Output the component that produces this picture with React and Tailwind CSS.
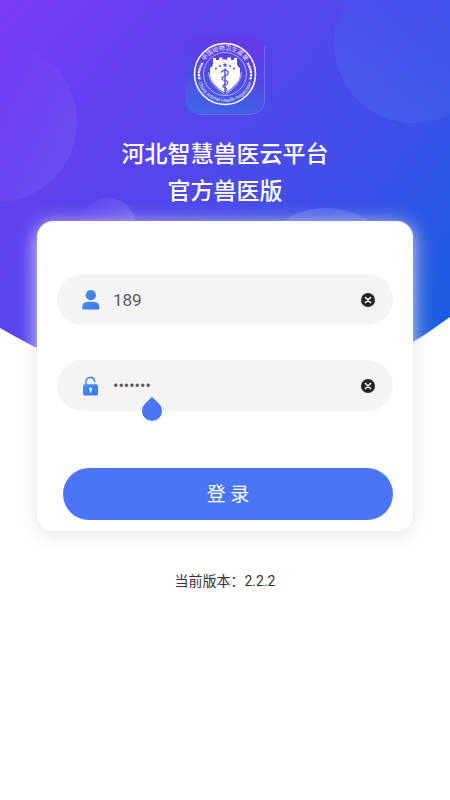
import { useState } from "react";

const FONT = "font-['Roboto','Noto_Sans_CJK_SC',sans-serif]";

function Backdrop() {
  return (
    <svg
      className="absolute inset-x-0 top-0 h-[410px] w-full"
      viewBox="0 0 450 410"
      preserveAspectRatio="none"
      aria-hidden="true"
    >
      <defs>
        <linearGradient id="sky" gradientUnits="userSpaceOnUse" x1="0" y1="0" x2="400" y2="340">
          <stop offset="0" stopColor="#7a3bf7" />
          <stop offset="0.25" stopColor="#6540f1" />
          <stop offset="0.5" stopColor="#5147ec" />
          <stop offset="0.8" stopColor="#3653e7" />
          <stop offset="1" stopColor="#1d5de2" />
        </linearGradient>
        <linearGradient id="bubbleLeft" gradientUnits="userSpaceOnUse" x1="0" y1="90" x2="77" y2="130">
          <stop offset="0" stopColor="#fff" stopOpacity="0" />
          <stop offset="1" stopColor="#fff" stopOpacity="0.06" />
        </linearGradient>
        <linearGradient id="bubbleRight" gradientUnits="userSpaceOnUse" x1="370" y1="110" x2="440" y2="0">
          <stop offset="0" stopColor="#5478f2" stopOpacity="0.3" />
          <stop offset="1" stopColor="#3560ea" stopOpacity="0.2" />
        </linearGradient>
        <linearGradient id="bubbleSmall" x1="0" y1="0.6" x2="1" y2="0.2">
          <stop offset="0" stopColor="#fff" stopOpacity="0" />
          <stop offset="1" stopColor="#fff" stopOpacity="0.13" />
        </linearGradient>
      </defs>
      <path d="M0 0H450V317Q338 400 225 400Q125 400 0 328Z" fill="url(#sky)" />
      <circle cx="-3" cy="122" r="80" fill="url(#bubbleLeft)" />
      <circle cx="414" cy="43" r="80" fill="url(#bubbleRight)" />
      <circle cx="108" cy="226" r="28" fill="url(#bubbleSmall)" />
      <circle cx="326" cy="288" r="80" fill="#fff" fillOpacity="0.12" />
    </svg>
  );
}

function Logo() {
  return (
    <svg className="size-20" viewBox="0 0 80 80" role="img" aria-label="中国动物卫生监督">
      <defs>
        <linearGradient id="tile" x1="0.6" y1="0" x2="0.4" y2="1">
          <stop offset="0" stopColor="#663ae8" />
          <stop offset="0.5" stopColor="#5148e8" />
          <stop offset="1" stopColor="#4065e8" />
        </linearGradient>
        <path id="arcTop" d="M16 39A24 24 0 0 1 64 39" />
        <path id="arcBottom" d="M12 39A28 28 0 0 0 68 39" />
      </defs>
      <rect width="79" height="79" rx="14" fill="url(#tile)" />
      <path d="M79.5 12V66Q79 78 66 79.5H14" fill="none" stroke="#8a98f3" strokeWidth="0.8" opacity="0.6" />
      <circle cx="40" cy="39" r="30.5" fill="none" stroke="#fff" strokeWidth="1.5" />
      <circle cx="40" cy="39" r="21.5" fill="none" stroke="#dcdcff" strokeWidth="0.7" />
      <text fill="#f2f2ff" fontSize="6" textAnchor="middle" className={FONT}>
        <textPath href="#arcTop" startOffset="50%">中国动物卫生监督</textPath>
      </text>
      <text fill="#e2e6ff" fontSize="5" textAnchor="middle" className={FONT}>
        <textPath href="#arcBottom" startOffset="50%">China Animal Health Inspection</textPath>
      </text>
      <g fill="none" stroke="#fff" strokeWidth="2.200" strokeDasharray="2.200 0.700">
        <path d="M17.500 28Q12 37 15 45" />
        <path d="M62.500 28Q68 37 65 45" />
      </g>
      <path
        d="M28 27V23H31V25H34V22.500H37.500V24.500H42.500V22.500H46V25H49V23H52V27Q51.500 31 55 33V41Q54 49 40 58Q26 49 25 41V33Q28.500 31 28 27Z"
        fill="#fff"
      />
      <path d="M23.500 37Q24 50 40 59.500Q56 50 56.500 37" fill="none" stroke="#dcdcff" strokeWidth="0.800" />
      <g fill="#5548e6">
        <circle cx="31" cy="33.500" r="1" />
        <circle cx="35" cy="31" r="1" />
        <circle cx="45" cy="31" r="1" />
        <circle cx="49" cy="33.500" r="1" />
        <path d="M40 27.500L40.700 29.300L42.500 29.300L41.100 30.500L41.600 32.300L40 31.200L38.400 32.300L38.900 30.500L37.500 29.300L39.300 29.300Z" />
      </g>
      <g fill="none" stroke="#4a4ae0" strokeLinecap="round">
        <path d="M40 34V59" strokeWidth="1.400" />
        <path
          d="M36.500 37Q39 34 42.500 36Q45 39 40 41Q35 43 38 45Q45 46 42 49Q37 50 38 52Q43 53 41 56"
          strokeWidth="1.200"
        />
      </g>
    </svg>
  );
}

function IconGradient({ id }) {
  return (
    <linearGradient id={id} x1="0" y1="0" x2="1" y2="1">
      <stop offset="0" stopColor="#4c93f0" />
      <stop offset="1" stopColor="#3c72f0" />
    </linearGradient>
  );
}

function UserIcon() {
  return (
    <svg className="h-5 w-[18px]" viewBox="0 0 18 20" aria-hidden="true">
      <defs><IconGradient id="userFill" /></defs>
      <circle cx="8.800" cy="5.200" r="5.100" fill="url(#userFill)" />
      <path d="M0.100 18Q0 11.800 6 11.800H11.500Q17.500 11.800 17.400 18Q17.400 19.600 15.900 19.600H1.600Q0.100 19.600 0.100 18Z" fill="url(#userFill)" />
    </svg>
  );
}

function LockIcon() {
  return (
    <svg className="h-5 w-[18px]" viewBox="0 0 18 20" aria-hidden="true">
      <defs><IconGradient id="lockFill" /></defs>
      <path d="M4 9V5.200A4.400 4.400 0 0 1 12.600 4.600V6" fill="none" stroke="#4a8af0" strokeWidth="1.500" strokeLinecap="round" />
      <rect x="1" y="8.300" width="15" height="11.300" rx="1.800" fill="url(#lockFill)" />
      <path d="M8.600 11.400A1.500 1.500 0 0 1 9.300 14.200V16.400H7.900V14.200A1.500 1.500 0 0 1 8.600 11.400Z" fill="#fff" />
    </svg>
  );
}

function Field({ id, label, type, value, onChange, icon, textSize, children }) {
  return (
    <div className="relative flex h-[51px] items-center rounded-full bg-[#f4f4f4] pr-[18px] pl-[25px]">
      <label htmlFor={id} className="shrink-0">{icon}</label>
      <input
        id={id}
        type={type}
        aria-label={label}
        value={value}
        onChange={(e) => onChange(e.target.value)}
        autoComplete="off"
        className={`ml-[13px] h-full min-w-0 flex-1 bg-transparent text-[#5a5a5a] outline-none ${textSize}`}
      />
      <button type="button" aria-label={`清除${label}`} onClick={() => onChange("")} className="shrink-0">
        <svg className="size-[14px]" viewBox="0 0 14 14" aria-hidden="true">
          <circle cx="7" cy="7" r="7" fill="#262626" />
          <path d="M4.500 4.500L9.500 9.500M9.500 4.500L4.500 9.500" stroke="#fff" strokeWidth="1.600" strokeLinecap="round" />
        </svg>
      </button>
      {children}
    </div>
  );
}

export default function App() {
  const [account, setAccount] = useState("189");
  const [password, setPassword] = useState("1234567");

  return (
    <div className={`relative min-h-screen bg-white ${FONT}`}>
      <Backdrop />
      <main className="relative flex flex-col items-center px-[37px] pt-[35px]">
        <Logo />
        <h1 className="mt-[21px] text-center text-[23px] leading-[37px] font-medium text-white">
          河北智慧兽医云平台
          <br />
          官方兽医版
        </h1>
        <form
          onSubmit={(e) => e.preventDefault()}
          className="mt-[11px] flex w-full flex-col rounded-2xl bg-white px-5 pt-[53px] pb-[11px] shadow-[0_4px_20px_#e4e4e4]"
        >
          <Field id="account" label="账号" type="text" value={account} onChange={setAccount} icon={<UserIcon />} textSize="text-[17px]" />
          <div className="mt-[35px]">
            <Field id="password" label="密码" type="password" value={password} onChange={setPassword} icon={<LockIcon />} textSize="text-base">
              <svg className="absolute top-9 left-[85px] h-[25px] w-5" viewBox="0 0 20 25" aria-hidden="true">
                <path d="M10 1L16.800 7.600A10 10 0 1 1 3.200 7.600Z" fill="#4876f5" />
              </svg>
            </Field>
          </div>
          <button type="submit" className="mt-[57px] ml-[6px] h-[52px] rounded-full bg-[#4a75f6] pt-0.5 text-[19px] text-white">
            登 录
          </button>
        </form>
        <p className="mt-10 text-sm text-[#333]">当前版本：2.2.2</p>
      </main>
    </div>
  );
}
